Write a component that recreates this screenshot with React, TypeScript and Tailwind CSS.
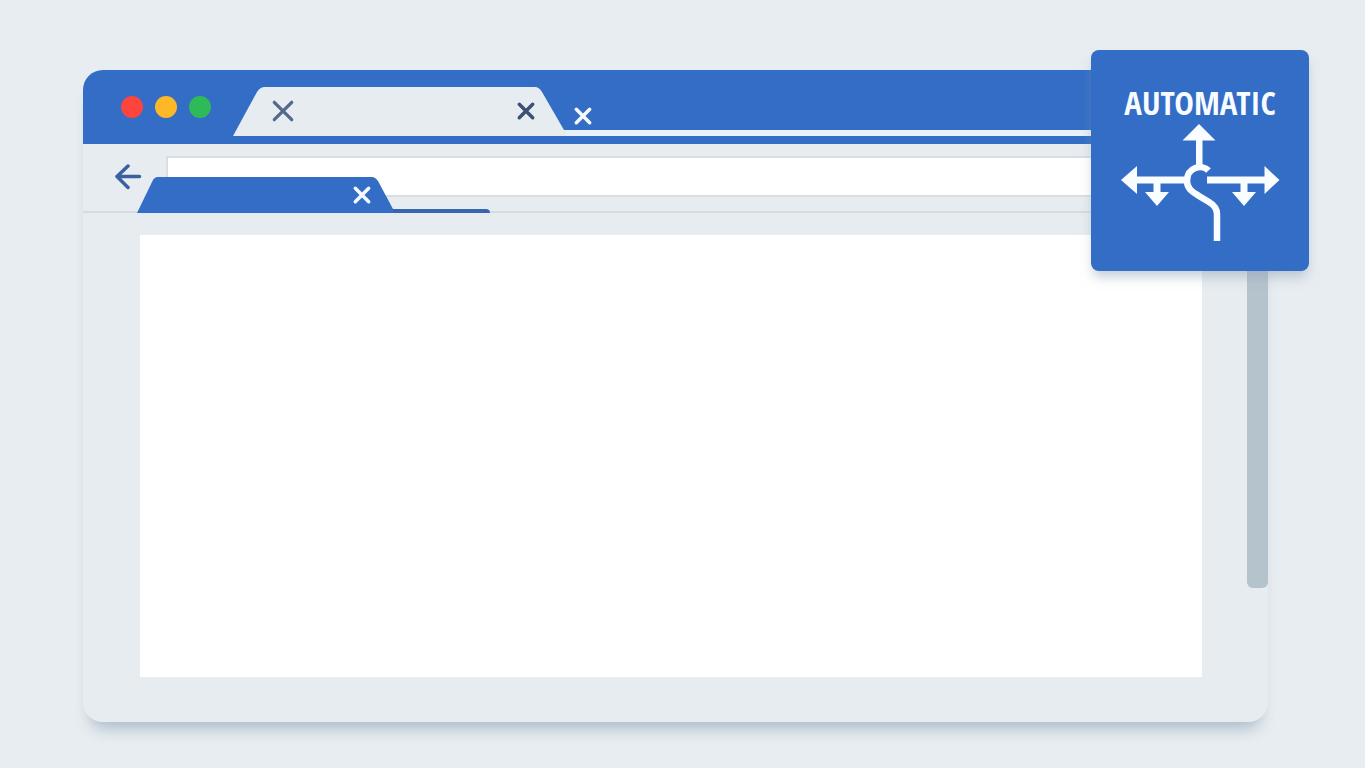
import { useState } from "react";

const dots = [
  { name: "Close window", color: "bg-[#fb453d]" },
  { name: "Minimize window", color: "bg-[#fdb827]" },
  { name: "Maximize window", color: "bg-[#2fba5a]" },
];

function Cross({ className }: { className: string }) {
  return (
    <svg viewBox="0 0 20 20" className={className} fill="none" stroke="currentColor" strokeLinecap="round" aria-hidden="true">
      <path d="M3.300 3.300 16.700 16.700M16.700 3.300 3.300 16.700" />
    </svg>
  );
}

function JunctionSign() {
  return (
    <svg viewBox="-1 0 160 118" className="h-[118px] w-40" aria-hidden="true">
      <g fill="#fafdff">
        <path d="M78 0 94.500 16.500H81.500V42H75V16.500H61.500Z" />
        <path d="M0 56 16 42V52.500H64V59.500H39.500V68H48L36 82 24 68H32.500V59.500H16V70Z" />
        <path d="M158.500 56 143.500 42V52.500H86V59.500H119.500V68H111L123 82 135 68H126.500V59.500H143.500V70Z" />
      </g>
      <path
        d="M87.500 46.500C81 40 66 43 66 57C66 65 72 68 78 72L88 78C93 81 96 84 96 90V117"
        fill="none"
        stroke="#fafdff"
        strokeWidth="6.500"
      />
    </svg>
  );
}

export default function App() {
  const [address, setAddress] = useState("");

  return (
    <div className="flex min-h-screen flex-col bg-[#e8edf1] pt-[70px] pr-[97px] pb-[46px] pl-[83px] font-['Liberation_Sans',sans-serif]">
      <div className="relative flex flex-1 flex-col rounded-[20px] bg-[#e7ecf0] shadow-[0_14px_16px_-8px_#a9b9c8]">
        {/* title bar */}
        <header className="flex h-[74px] items-end rounded-t-[20px] bg-[#336dc6] pb-2">
          <div className="mt-2 flex gap-3 self-center pl-[38px]">
            {dots.map((dot) => (
              <button key={dot.name} aria-label={dot.name} className={`size-[22px] rounded-full ${dot.color}`} />
            ))}
          </div>

          <div className="relative ml-[22px] h-[49px] w-[333px] shrink-0">
            <svg viewBox="0 0 333 49" className="absolute inset-0 size-full" aria-hidden="true">
              <path d="M0 49 24 5Q27 0 32 0H302Q306 0 309 5L331 43H333V49Z" fill="#e7ecf0" />
            </svg>
            <div className="relative flex h-full items-center justify-between pr-[30px] pb-0.5 pl-[37px]">
              <button aria-label="Stop" className="text-[#52688c]">
                <Cross className="size-[26px] stroke-[2.5]" />
              </button>
              <button aria-label="Close tab" className="text-[#3c5074]">
                <Cross className="size-5 stroke-[3.5]" />
              </button>
            </div>
          </div>

          <div className="flex h-[49px] flex-1 flex-col justify-between border-b-6 border-[#e8f0f8] pt-[19px]">
            <button aria-label="Close" className="ml-[7px] size-5 text-[#f4faff]">
              <Cross className="size-5 stroke-[3.5]" />
            </button>
          </div>
        </header>

        {/* address bar */}
        <div className="relative flex h-[69px] items-start border-b-2 border-[#d5dbe1] pt-3">
          <button aria-label="Back" className="mt-2 ml-[31px] text-[#39619f]">
            <svg viewBox="0 0 28 26" className="h-[26px] w-7" fill="none" stroke="currentColor" strokeWidth="3.500" strokeLinecap="round" strokeLinejoin="round" aria-hidden="true">
              <path d="M25.500 12.500H3M14 2 3 12.500 14 23.500" />
            </svg>
          </button>
          <input
            type="text"
            aria-label="Address"
            value={address}
            onChange={(e) => setAddress(e.target.value)}
            className="ml-6 h-[41px] min-w-0 flex-1 border-2 border-r-0 border-[#d9dee5] bg-white px-3 outline-none"
          />

          {/* second tab sits over the field */}
          <div className="absolute -bottom-0.5 left-[54px] flex items-end">
            <div className="relative flex h-9 w-64 items-center justify-end pr-[21px]">
              <svg viewBox="0 0 256 36" className="absolute inset-0 size-full" aria-hidden="true">
                <path d="M0 36 15 5Q17 0 21 0H235Q238 0 241 4L256 32V36Z" fill="#336dc6" />
              </svg>
              <button aria-label="Close page tab" className="relative text-[#f4faff]">
                <Cross className="size-5 stroke-[3.5]" />
              </button>
            </div>
            <div className="h-1 w-[97px] rounded-tr-sm bg-[#3765ae]" />
          </div>
        </div>

        <div className="flex flex-1 gap-[45px] pl-[57px]">
          <main className="mt-[22px] mb-[45px] flex-1 bg-white" />
          <div className="mb-[134px] w-[21px] rounded-b-md bg-[#b5c3cd]" />
        </div>

        <section className="absolute -top-5 -right-[41px] flex h-[221px] w-[218px] flex-col items-center rounded-lg bg-[#336dc6] pt-8 shadow-[0_8px_12px_-2px_#8da0b380]">
          <h1 className="font-['Open_Sans_Condensed','Roboto_Condensed','Liberation_Sans',sans-serif] text-[33px] leading-[42px] font-medium text-[#f7fcff]">
            AUTOMATIC
          </h1>
          <JunctionSign />
        </section>
      </div>
    </div>
  );
}
